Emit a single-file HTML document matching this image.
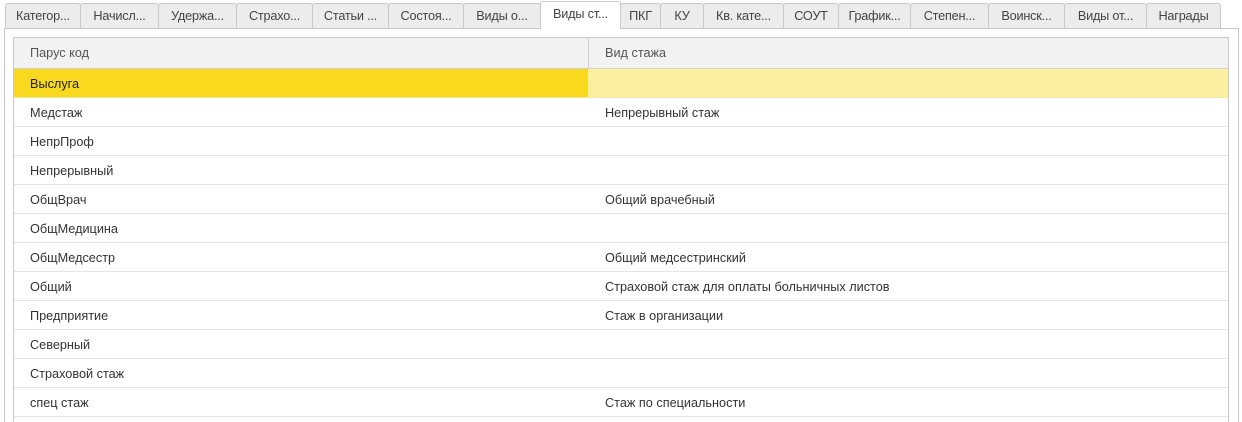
<!DOCTYPE html>
<html><head><meta charset="utf-8"><style>
html,body{margin:0;width:1242px;height:422px;overflow:hidden}
body{background:#fff;position:relative;font-family:"Liberation Sans",Arial,sans-serif;font-size:12.7px;color:#333}
.tab{position:absolute;top:3px;height:25px;box-sizing:border-box;border:1px solid #c8c8c8;border-bottom:none;background:#ececec;line-height:24px;text-align:center;color:#444;border-radius:3px 3px 0 0;letter-spacing:-0.2px}
.tab.act{background:#fff;top:1px;height:28px;z-index:2}
.panel{position:absolute;left:4px;top:28px;width:1235px;height:394px;border:1px solid #c8c8c8;border-bottom:none;box-sizing:border-box}
.grid{position:absolute;left:13px;top:37px;width:1216px;height:385px;border:1px solid #c8c8c8;border-bottom:none;box-sizing:border-box;overflow:hidden}
.row{position:absolute;left:0;width:1214px;height:29px;border-bottom:1px solid #e4e4e4;box-sizing:border-box;line-height:30px}
.c1,.c2{box-sizing:border-box;position:absolute;top:0;height:100%}
.c1{left:0;width:574px;padding-left:16px}
.c2{left:574px;padding-left:17px;width:640px}
.hdr{background:#f2f2f2;border-bottom:1px solid #d0d0d0;height:31px;line-height:30px;color:#555}
.hdr .c1{border-right:1px solid #d0d0d0;width:575px}
</style></head><body>
<div class="panel"></div>
<div class="tab" style="left:5px;width:76px">Категор...</div>
<div class="tab" style="left:80px;width:79px">Начисл...</div>
<div class="tab" style="left:158px;width:79px">Удержа...</div>
<div class="tab" style="left:236px;width:77px">Страхо...</div>
<div class="tab" style="left:312px;width:77px">Статьи ...</div>
<div class="tab" style="left:388px;width:76px">Состоя...</div>
<div class="tab" style="left:463px;width:78px">Виды о...</div>
<div class="tab act" style="left:540px;width:81px">Виды ст...</div>
<div class="tab" style="left:620px;width:41px">ПКГ</div>
<div class="tab" style="left:660px;width:44px">КУ</div>
<div class="tab" style="left:703px;width:81px">Кв. кате...</div>
<div class="tab" style="left:783px;width:56px">СОУТ</div>
<div class="tab" style="left:838px;width:73px">График...</div>
<div class="tab" style="left:910px;width:79px">Степен...</div>
<div class="tab" style="left:988px;width:77px">Воинск...</div>
<div class="tab" style="left:1064px;width:83px">Виды от...</div>
<div class="tab" style="left:1146px;width:75px">Награды</div>
<div class="grid">
<div class="row hdr" style="top:0"><div class="c1">Парус код</div><div class="c2">Вид стажа</div></div>
<div class="row" style="top:31px;background:#fbefa0;border-bottom-color:#f3e6a0"><div class="c1" style="background:#f9d91e;color:#222">Выслуга</div><div class="c2"></div></div>
<div class="row" style="top:60px"><div class="c1">Медстаж</div><div class="c2">Непрерывный стаж</div></div>
<div class="row" style="top:89px"><div class="c1">НепрПроф</div></div>
<div class="row" style="top:118px"><div class="c1">Непрерывный</div></div>
<div class="row" style="top:147px"><div class="c1">ОбщВрач</div><div class="c2">Общий врачебный</div></div>
<div class="row" style="top:176px"><div class="c1">ОбщМедицина</div></div>
<div class="row" style="top:205px"><div class="c1">ОбщМедсестр</div><div class="c2">Общий медсестринский</div></div>
<div class="row" style="top:234px"><div class="c1">Общий</div><div class="c2">Страховой стаж для оплаты больничных листов</div></div>
<div class="row" style="top:263px"><div class="c1">Предприятие</div><div class="c2">Стаж в организации</div></div>
<div class="row" style="top:292px"><div class="c1">Северный</div></div>
<div class="row" style="top:321px"><div class="c1">Страховой стаж</div></div>
<div class="row" style="top:350px"><div class="c1">спец стаж</div><div class="c2">Стаж по специальности</div></div>
</div>
</body></html>
